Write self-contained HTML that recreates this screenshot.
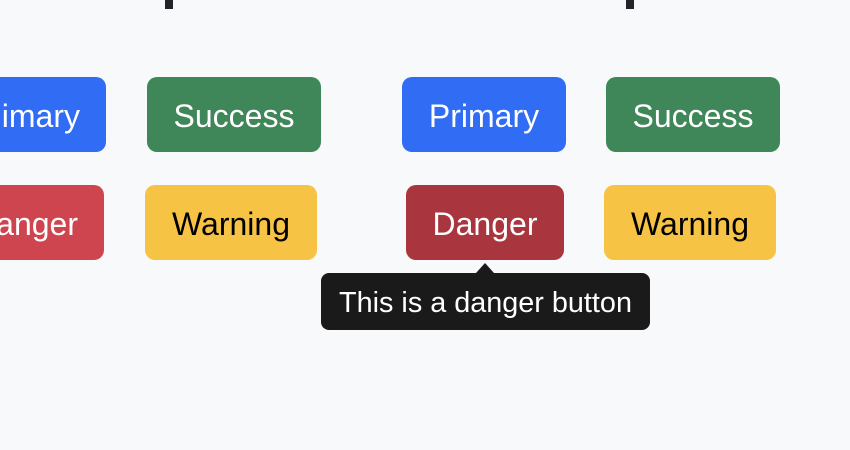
<!DOCTYPE html>
<html><head><style>
body{margin:0;width:850px;height:450px;background:#f8f9fa;overflow:hidden;position:relative;font-family:"Liberation Sans",sans-serif}
.b{position:absolute;height:75px;border-radius:10px;display:flex;align-items:center;justify-content:center;font-size:32px;color:#fff;box-sizing:border-box;padding-top:4px}
.p{background:#316cf4}.s{background:#3f8758}.d{background:#cf454f}.dh{background:#a9363e}.w{background:#f6c344;color:#000}
.mk{position:absolute;top:0;width:8px;height:9px;background:#212529}
.tt{position:absolute;left:321px;top:273px;width:329px;height:57px;background:#1a1a1a;border-radius:8px;color:#fff;font-size:28.8px;display:flex;align-items:center;justify-content:center;box-sizing:border-box;padding-top:3px}
.ar{position:absolute;left:476px;top:263px;width:0;height:0;border-left:9px solid transparent;border-right:9px solid transparent;border-bottom:10px solid #1a1a1a}
</style></head><body>
<div class="mk" style="left:165px"></div>
<div class="mk" style="left:626px"></div>
<div class="b p" style="left:-60px;top:77px;width:166px;justify-content:flex-end"><span style="margin-right:26px">imary</span></div>
<div class="b s" style="left:147px;top:77px;width:174px">Success</div>
<div class="b d" style="left:-60px;top:185px;width:164px;justify-content:flex-end"><span style="margin-right:26px">anger</span></div>
<div class="b w" style="left:145px;top:185px;width:172px">Warning</div>
<div class="b p" style="left:402px;top:77px;width:164px">Primary</div>
<div class="b s" style="left:606px;top:77px;width:174px">Success</div>
<div class="b dh" style="left:406px;top:185px;width:158px">Danger</div>
<div class="b w" style="left:604px;top:185px;width:172px">Warning</div>
<div class="ar"></div>
<div class="tt">This is a danger button</div>
</body></html>
